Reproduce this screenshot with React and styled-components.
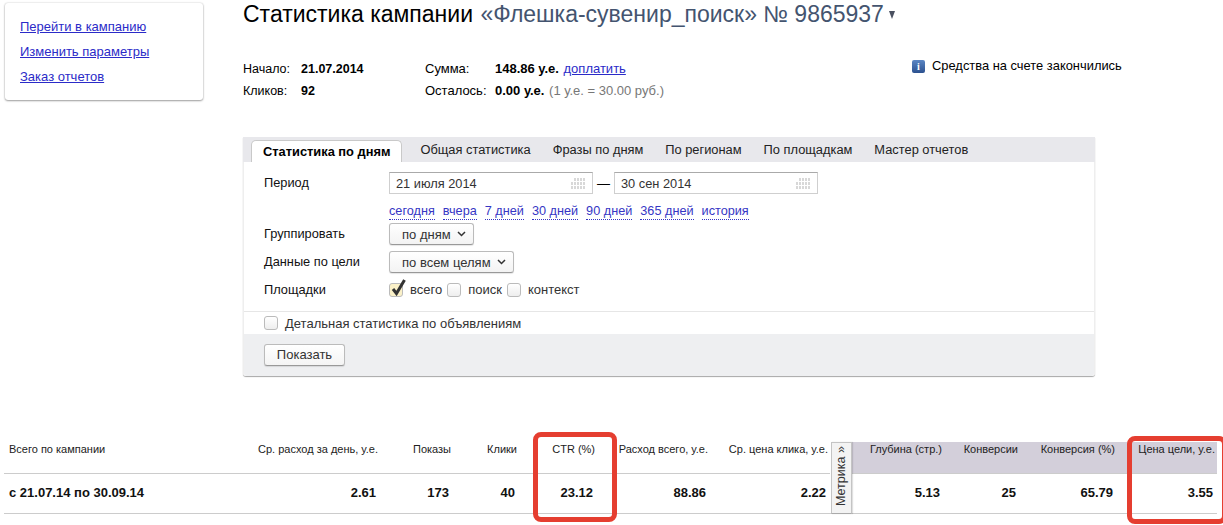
import styled, { createGlobalStyle } from "styled-components";

const GlobalStyle = createGlobalStyle`
  html, body {
    margin: 0;
    padding: 0;
    background: #fff;
    overflow: hidden;
  }
  body {
    font-family: "Liberation Sans", Arial, sans-serif;
    font-size: 13px;
    color: #000;
  }
`;

const Page = styled.div`
  width: 1223px;
  height: 525px;
  overflow: hidden;
`;

const Top = styled.div`
  display: flex;
  align-items: flex-start;
`;

// SIDEBAR
const Sidebar = styled.div`
  width: 198px;
  height: 97px;
  margin: 3px 0 0 5px;
  padding: 16px 15px 0;
  box-sizing: border-box;
  background: #fff;
  border-radius: 3px;
  box-shadow: 0 0 2px rgba(0, 0, 0, 0.2), 0 1px 2px rgba(0, 0, 0, 0.35);
  display: flex;
  flex-direction: column;
  gap: 10px;
`;

const Link = styled.a`
  color: #2b2bc8;
  text-decoration: underline;
  line-height: 15px;
`;

// MAIN COLUMN
const Content = styled.div`
  width: 851px;
  margin-left: 40px;
`;

const Title = styled.h1`
  margin: 0;
  height: 29px;
  font-size: 23px;
  line-height: 29px;
  font-weight: normal;
  white-space: nowrap;
  color: #000;
`;

const TitleName = styled.span`
  color: #44546f;
  margin-left: 1px;
`;

const Arrow = styled.span`
  display: inline-block;
  width: 0;
  height: 0;
  margin-left: 5px;
  vertical-align: 3px;
  border-left: 3.5px solid transparent;
  border-right: 3.5px solid transparent;
  border-top: 8px solid #4a5060;
`;

const Meta = styled.div`
  display: flex;
  height: 44px;
  margin-top: 29px;
  line-height: 22px;
  font-size: 13px;
`;

const MetaGroup = styled.div`
  flex: none;
  display: grid;
  grid-template-columns: ${(p) => p.$label}px auto;
  width: ${(p) => p.$width}px;
  grid-auto-rows: 22px;
  align-content: start;
  font-size: ${(p) => p.$size || 13}px;
`;

const Strong = styled.b`
  white-space: nowrap;
`;

const Muted = styled.span`
  color: #777;
  font-weight: normal;
  margin-left: 1px;
`;

const PayLink = styled.a`
  color: #2b2bc8;
  font-weight: normal;
  text-decoration: underline;
  margin-left: 1px;
`;

const Notice = styled.div`
  flex: none;
  display: flex;
  align-items: center;
  gap: 7px;
  height: 14px;
  margin: 1px 0 0 17px;
  font-size: 12.9px;
  white-space: nowrap;
`;

const InfoIcon = styled.span`
  width: 13px;
  height: 13px;
  border-radius: 2px;
  background: linear-gradient(#5b86c4, #2c518f);
  color: #fff;
  font: bold 10px/13px "Liberation Serif", serif;
  text-align: center;
`;

// FILTER PANEL
const Panel = styled.div`
  margin-top: 35px;
  height: 239px;
  border-right: 1px solid #eee;
  border-left: 1px solid #eee;
  border-radius: 0 0 3px 3px;
  box-shadow: 0 1px 1px rgba(0, 0, 0, 0.35);
  display: flex;
  flex-direction: column;
  margin-right: -1px;
`;

const Tabs = styled.div`
  height: 25px;
  flex: none;
  margin: 0 -1px;
  background: #e8e8ec;
  display: flex;
  align-items: flex-end;
  padding-left: 8px;
`;

const Tab = styled.div`
  height: ${(p) => (p.$active ? "22px" : "25px")};
  line-height: ${(p) => (p.$active ? "21px" : "25px")};
  margin-right: ${(p) => (p.$active ? "18px" : "22px")};
  padding: ${(p) => (p.$active ? "0 11px" : "0")};
  box-sizing: border-box;
  font-size: 12.85px;
  color: #222;
  white-space: nowrap;
  ${(p) =>
    p.$active &&
    `
    background: #fff;
    font-weight: bold;
    color: #000;
    border: 1px solid #c9c9c9;
    border-bottom: none;
    border-radius: 5px 5px 0 0;
  `}
`;

const Form = styled.div`
  flex: none;
  height: 149px;
  padding: 10px 0 0 20px;
  box-sizing: border-box;
  display: grid;
  grid-template-columns: 125px 1fr;
  grid-template-rows: 22px 29px 28px 28px 28px;
  font-size: 13px;
  align-items: start;
`;

const Label = styled.div`
  line-height: 21px;
  font-size: 12.8px;
  color: #111;
`;

const Controls = styled.div`
  display: flex;
  align-items: ${(p) => p.$align || "center"};
  gap: ${(p) => p.$gap || 0}px;
  margin-top: ${(p) => p.$mt || 0}px;
`;

const DateInput = styled.div`
  width: 204px;
  height: 22px;
  box-sizing: border-box;
  border: 1px solid #cfcfcf;
  border-top-color: #aaa;
  padding: 0 6px;
  display: flex;
  align-items: center;
  justify-content: space-between;
  font-size: 12.8px;
  color: #333;
`;

const Dash = styled.span`
  width: 21px;
  text-align: center;
  font-size: 13px;
`;

const QuickLink = styled.a`
  color: #3636c4;
  font-size: 12.7px;
  line-height: 15px;
  border-bottom: 1px dotted #3636c4;
  margin-top: 10px;
`;

const Select = styled.div`
  height: 22px;
  box-sizing: border-box;
  padding: 0 7px 0 12px;
  display: inline-flex;
  align-items: center;
  gap: 6px;
  border: 1px solid #bbb;
  border-bottom-color: #999;
  border-radius: 3px;
  background: linear-gradient(#fff, #f3f3f3);
  box-shadow: 0 1px 1px rgba(0, 0, 0, 0.1);
  font-size: 13px;
  color: #333;
  white-space: nowrap;
`;

const Box = styled.span`
  position: relative;
  flex: none;
  box-sizing: border-box;
  width: 14px;
  height: 14px;
  border: 1px solid #bbb;
  border-radius: 3px;
  background: ${(p) => (p.$checked ? "#fbf1c8" : "linear-gradient(#fff, #eee)")};
  margin-right: ${(p) => p.$mr || 0}px;
`;

const CheckMark = styled.svg`
  position: absolute;
  left: 0;
  top: -6px;
`;

const CheckLabel = styled.span`
  font-size: 13px;
  color: #333;
  margin-right: ${(p) => p.$mr || 0}px;
`;

const DetailRow = styled.div`
  flex: none;
  height: 22px;
  border-top: 1px solid #e6e6e6;
  padding-left: 20px;
  display: flex;
  align-items: center;
  font-size: 13px;
  color: #333;
`;

const Footer = styled.div`
  flex: 1;
  background: #eeeff1;
  padding: 10px 0 0 20px;
  border-radius: 0 0 3px 3px;
`;

const Button = styled.div`
  width: 81px;
  height: 22px;
  box-sizing: border-box;
  border: 1px solid #bbb;
  border-bottom-color: #999;
  border-radius: 3px;
  background: linear-gradient(#fff, #f4f4f4);
  box-shadow: 0 1px 1px rgba(0, 0, 0, 0.1);
  font-size: 13px;
  line-height: 20px;
  text-align: center;
  color: #333;
`;

// TOTALS TABLE
const TableWrap = styled.div`
  position: relative;
  margin: 66px 0 0 4px;
  width: 1213px;
`;

const Table = styled.div`
  display: grid;
  grid-template-columns: 200px 176px 73px 66px 78px 113px 120px 22px 92px 76px 97px 100px;
  grid-template-rows: 32px 39px;
  border-bottom: 1px solid #ccc;
`;

const HeadCell = styled.div`
  grid-row: 1;
  height: 32px;
  box-sizing: border-box;
  border-bottom: 1px solid #ccc;
  background: ${(p) => (p.$metric ? "#d3cfda" : "transparent")};
  font-size: 11px;
  line-height: 15px;
  text-align: ${(p) => (p.$left ? "left" : "right")};
  padding: 0 ${(p) => (p.$left ? 0 : 2)}px 0 ${(p) => (p.$left ? 5 : 0)}px;
  color: #222;
  white-space: nowrap;
`;

const ValueCell = styled.div`
  grid-row: 2;
  font-size: 13px;
  font-weight: bold;
  line-height: 38px;
  text-align: ${(p) => (p.$left ? "left" : "right")};
  padding: 0 ${(p) => (p.$left ? 0 : 4)}px 0 ${(p) => (p.$left ? 5 : 0)}px;
  color: #111;
  white-space: nowrap;
`;

const MetrikaTab = styled.div`
  grid-column: 8;
  grid-row: 1 / span 2;
  margin-left: 1px;
  height: 72px;
  box-sizing: border-box;
  border: 1px solid #c4c4c4;
  border-top-color: #aaa;
  background: #f3f3f3;
  box-shadow: -1px 0 1px rgba(0, 0, 0, 0.12);
  writing-mode: vertical-rl;
  transform: rotate(180deg);
  font-size: 12.5px;
  line-height: 19px;
  padding-top: 7px;
  color: #333;
  white-space: nowrap;
  z-index: 1;
`;

const Highlight = styled.div`
  position: absolute;
  left: ${(p) => p.$left}px;
  top: ${(p) => p.$top}px;
  width: ${(p) => p.$width}px;
  height: ${(p) => p.$height}px;
  box-sizing: border-box;
  border: 5px solid #e53e30;
  border-radius: 8px;
  pointer-events: none;
`;

const CalendarIcon = () => (
  <svg width="15" height="11" viewBox="0 0 15 11">
    {[0, 1, 2].map((r) =>
      [0, 1, 2, 3, 4].map((c) => (
        <rect
          key={`${r}-${c}`}
          x={c * 3}
          y={r * 4}
          width="2"
          height="3"
          fill={r === 0 && c === 0 ? "#fff" : "#d8d8d8"}
        />
      ))
    )}
  </svg>
);

const Chevron = () => (
  <svg width="9" height="6" viewBox="0 0 9 6">
    <path d="M1 1l3.5 3.5L8 1" fill="none" stroke="#333" strokeWidth="1.5" />
  </svg>
);

const quickLinks = ["сегодня", "вчера", "7 дней", "30 дней", "90 дней", "365 дней", "история"];
const tabs = ["Общая статистика", "Фразы по дням", "По регионам", "По площадкам", "Мастер отчетов"];

const columns = [
  { head: "Всего по кампании", value: "с 21.07.14 по 30.09.14", left: true },
  { head: "Ср. расход за день, у.е.", value: "2.61" },
  { head: "Показы", value: "173" },
  { head: "Клики", value: "40" },
  { head: "CTR (%)", value: "23.12" },
  { head: "Расход всего, у.е.", value: "88.86" },
  { head: "Ср. цена клика, у.е.", value: "2.22" },
  { head: "Глубина (стр.)", value: "5.13", metric: true },
  { head: "Конверсии", value: "25", metric: true },
  { head: "Конверсия (%)", value: "65.79", metric: true },
  { head: "Цена цели, у.е.", value: "3.55", metric: true },
];

export default function App() {
  return (
    <Page>
      <GlobalStyle />
      <Top>
        <Sidebar>
          <Link>Перейти в кампанию</Link>
          <Link>Изменить параметры</Link>
          <Link>Заказ отчетов</Link>
        </Sidebar>
        <Content>
          <Title>
            Статистика кампании <TitleName>«Флешка-сувенир_поиск» № 9865937</TitleName>
            <Arrow />
          </Title>
          <Meta>
            <MetaGroup $label={58} $width={182} $size={12.5}>
              <span>Начало:</span>
              <Strong>21.07.2014</Strong>
              <span>Кликов:</span>
              <Strong>92</Strong>
            </MetaGroup>
            <MetaGroup $label={70} $width={470}>
              <span>Сумма:</span>
              <Strong>
                148.86 у.е. <PayLink>доплатить</PayLink>
              </Strong>
              <span>Осталось:</span>
              <Strong>
                0.00 у.е. <Muted>(1 у.е. = 30.00 руб.)</Muted>
              </Strong>
            </MetaGroup>
            <Notice>
              <InfoIcon>i</InfoIcon>
              Средства на счете закончились
            </Notice>
          </Meta>
          <Panel>
            <Tabs>
              <Tab $active>Статистика по дням</Tab>
              {tabs.map((t) => (
                <Tab key={t}>{t}</Tab>
              ))}
            </Tabs>
            <Form>
              <Label>Период</Label>
              <Controls>
                <DateInput>
                  21 июля 2014
                  <CalendarIcon />
                </DateInput>
                <Dash>—</Dash>
                <DateInput>
                  30 сен 2014
                  <CalendarIcon />
                </DateInput>
              </Controls>
              <span />
              <Controls $gap={8} $align="flex-start">
                {quickLinks.map((l) => (
                  <QuickLink key={l}>{l}</QuickLink>
                ))}
              </Controls>
              <Label>Группировать</Label>
              <Controls>
                <Select>
                  по дням
                  <Chevron />
                </Select>
              </Controls>
              <Label>Данные по цели</Label>
              <Controls>
                <Select>
                  по всем целям
                  <Chevron />
                </Select>
              </Controls>
              <Label>Площадки</Label>
              <Controls $mt={3}>
                <Box $checked $mr={7}>
                  <CheckMark width="16" height="18" viewBox="0 0 16 18">
                    <path d="M3 11l3.5 4.5L14.5 2" fill="none" stroke="#333" strokeWidth="3" />
                  </CheckMark>
                </Box>
                <CheckLabel $mr={5}>всего</CheckLabel>
                <Box $mr={7} />
                <CheckLabel $mr={5}>поиск</CheckLabel>
                <Box $mr={7} />
                <CheckLabel>контекст</CheckLabel>
              </Controls>
            </Form>
            <DetailRow>
              <Box $mr={7} />
              Детальная статистика по объявлениям
            </DetailRow>
            <Footer>
              <Button>Показать</Button>
            </Footer>
          </Panel>
        </Content>
      </Top>
      <TableWrap>
        <Table>
          {columns.map((c, i) => (
            <HeadCell key={c.head} $left={c.left} $metric={c.metric} style={{ gridColumn: i < 7 ? i + 1 : i + 2 }}>
              {c.head}
            </HeadCell>
          ))}
          <MetrikaTab>Метрика »</MetrikaTab>
          {columns.map((c, i) => (
            <ValueCell key={c.value} $left={c.left} style={{ gridColumn: i < 7 ? i + 1 : i + 2 }}>
              {c.value}
            </ValueCell>
          ))}
        </Table>
        <Highlight $left={529} $top={-10} $width={84} $height={90} />
        <Highlight $left={1123} $top={-6} $width={100} $height={88} />
      </TableWrap>
    </Page>
  );
}
